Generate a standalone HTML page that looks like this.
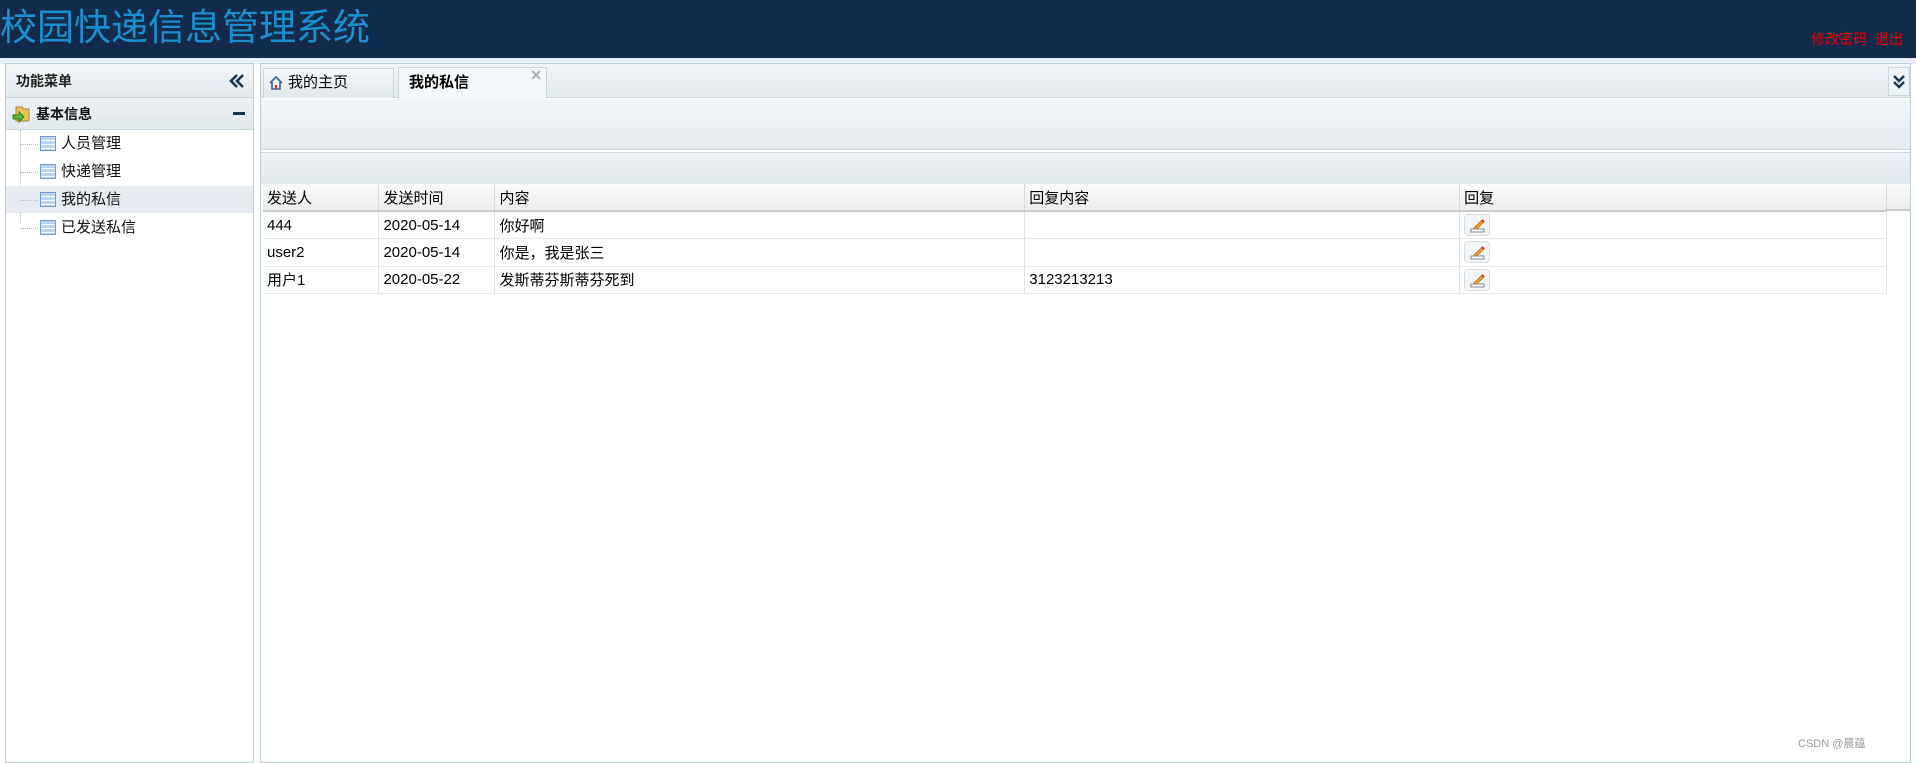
<!DOCTYPE html>
<html><head><meta charset="utf-8"><style>
*{margin:0;padding:0;box-sizing:border-box}
body{width:1916px;height:758px;overflow:hidden;background:#fff;font-family:"Liberation Sans","Noto Sans CJK SC",sans-serif;font-size:15px;color:#000;position:relative}
.a{position:absolute}
.hdr{left:0;top:0;width:1916px;height:58px;background:#122b4a}
.title{left:0;top:-3px;font-size:37px;color:#1a8fd0}
.links{right:13px;top:29px;font-size:14px;color:#e00}
.grey{background:#e9eef2}
.side{left:5px;top:63px;width:249px;height:700px;border:1px solid #b9ced9;background:#fff}
.sh{left:0;top:0;width:247px;height:34px;background:linear-gradient(#f2f6f8,#e3eaee);border-bottom:1px solid #c6d6de;font-weight:bold;font-size:14px;color:#222;padding:7px 0 0 10px}
.sh2{left:0;top:34px;width:247px;height:32px;background:linear-gradient(#eef3f5,#e1e9ed);border-bottom:1px solid #c6d6de;font-weight:bold;font-size:14px;color:#111;padding:6px 0 0 30px}
.it{left:0;width:247px;height:27px;font-size:15px;padding:2px 0 0 55px;color:#111}
.ic{width:16px;height:15px;border:1px solid #6f9bd0;background:repeating-linear-gradient(#bcd5f0 0 3px,#fff 3px 4px);left:34px;top:6px}
.main{left:260px;top:63px;width:1651px;height:700px;border:1px solid #b9ced9;background:#fff}
td,th{border-right:1px solid #e3e3e3;border-bottom:1px solid #e8e8e8;height:27.5px;text-align:left;font-weight:normal;padding:0 4px;font-size:15px;white-space:nowrap}
th{background:linear-gradient(#fafafa,#ececec);border-right:1px solid #d8d8d8;border-bottom:2px solid #ccc;height:27px}
.btn{display:inline-block;width:26px;height:22px;border:1px solid #d5dde4;border-radius:4px;background:#f3f6f8;vertical-align:middle;position:relative}
</style></head><body>
<div class="a hdr"></div>
<div class="a title">校园快递信息管理系统</div>
<div class="a links">修改密码&nbsp; 退出</div>
<div class="a grey" style="left:0;top:58px;width:1916px;height:6px"></div>

<div class="a side">
 <div class="a sh">功能菜单<svg class="a" style="right:8px;top:10px" width="16" height="14" viewBox="0 0 16 14"><path d="M8 1L2 7l6 6M14 1L8 7l6 6" fill="none" stroke="#1c3550" stroke-width="2.6"/></svg></div>
 <div class="a sh2">基本信息
  <svg class="a" style="left:6px;top:6px" width="20" height="20" viewBox="0 0 20 20"><path d="M4 3h6l2 2h5v12H4z" fill="#e8c458" stroke="#a8842a"/><path d="M1 11h6v-3l5 5-5 5v-3H1z" fill="#5ab53a" stroke="#2f7d1e"/></svg>
  <span class="a" style="right:8px;top:14px;width:12px;height:3px;background:#1c3550"></span></div>
 <div class="a" style="left:14px;top:66px;height:94px;border-left:1px dotted #bbb"></div>
 <div class="a it" style="top:66px"><div class="a ic"></div><span class="a" style="left:14px;top:14px;width:18px;border-top:1px dotted #bbb"></span>人员管理</div>
 <div class="a it" style="top:94px"><div class="a ic"></div><span class="a" style="left:14px;top:14px;width:18px;border-top:1px dotted #bbb"></span>快递管理</div>
 <div class="a it" style="top:122px;background:#e6ecf2"><div class="a ic"></div><span class="a" style="left:14px;top:14px;width:18px;border-top:1px dotted #bbb"></span>我的私信</div>
 <div class="a it" style="top:150px"><div class="a ic"></div><span class="a" style="left:14px;top:14px;width:18px;border-top:1px dotted #bbb"></span>已发送私信</div>
</div>

<div class="a main">
 <div class="a" style="left:0;top:0;width:1649px;height:34px;background:linear-gradient(#f1f5f7,#e4ebef);border-bottom:1px solid #c6d6de"></div>
 <div class="a" style="left:2px;top:4px;width:131px;height:30px;border:1px solid #c6d6de;border-bottom:none;background:linear-gradient(#f4f7f9,#e1e9ed);font-size:15px;padding:2px 0 0 24px">我的主页
  <svg class="a" style="left:5px;top:7px" width="14" height="14" viewBox="0 0 14 14"><path d="M1 7L7 1l6 6M3 6v7h8V6" fill="none" stroke="#3a5d9a" stroke-width="1.6"/><rect x="6" y="9" width="2" height="4" fill="#c33"/></svg></div>
 <div class="a" style="left:137px;top:3px;width:149px;height:32px;border:1px solid #c6d6de;border-bottom:none;background:#f5f8fa;font-weight:bold;font-size:15px;padding:3px 0 0 10px">我的私信<span class="a" style="right:4px;top:-1px;color:#a0b0bc;font-size:14px">✕</span></div>
 <div class="a" style="right:0;top:3px;width:22px;height:29px;border:1px solid #c6d6de;background:#eef3f5"><svg class="a" style="left:4px;top:7px" width="12" height="14" viewBox="0 0 12 14"><path d="M1 1l5 5 5-5M1 7l5 5 5-5" fill="none" stroke="#1c3550" stroke-width="2.4"/></svg></div>
 <div class="a" style="left:0;top:35px;width:1649px;height:51px;background:linear-gradient(#f1f5f7,#e5ecf0);border-bottom:1px solid #c6d6de"></div>
 <div class="a" style="left:0;top:88px;width:1649px;height:32px;background:linear-gradient(#eef3f5,#e1e9ed);border-top:1px solid #c6d6de"></div>
 <table class="a" style="left:2px;top:120px;border-collapse:collapse;width:1624px">
  <tr><th style="width:116px">发送人</th><th style="width:116px">发送时间</th><th style="width:530px">内容</th><th style="width:435px">回复内容</th><th style="width:427px">回复</th></tr>
  <tr><td>444</td><td>2020-05-14</td><td>你好啊</td><td></td><td><span class="btn"><svg class="a" style="left:5px;top:3px" width="16" height="15" viewBox="0 0 16 15"><path d="M4 10L12 2l2 2-8 8z" fill="#f0a020" stroke="#b05010" stroke-width=".6"/><path d="M12 2l2 2" stroke="#d33" stroke-width="2"/><rect x="1" y="11" width="13" height="3" fill="#fff" stroke="#888"/></svg></span></td></tr>
  <tr><td>user2</td><td>2020-05-14</td><td>你是，我是张三</td><td></td><td><span class="btn"><svg class="a" style="left:5px;top:3px" width="16" height="15" viewBox="0 0 16 15"><path d="M4 10L12 2l2 2-8 8z" fill="#f0a020" stroke="#b05010" stroke-width=".6"/><path d="M12 2l2 2" stroke="#d33" stroke-width="2"/><rect x="1" y="11" width="13" height="3" fill="#fff" stroke="#888"/></svg></span></td></tr>
  <tr><td>用户1</td><td>2020-05-22</td><td>发斯蒂芬斯蒂芬死到</td><td>3123213213</td><td><span class="btn"><svg class="a" style="left:5px;top:3px" width="16" height="15" viewBox="0 0 16 15"><path d="M4 10L12 2l2 2-8 8z" fill="#f0a020" stroke="#b05010" stroke-width=".6"/><path d="M12 2l2 2" stroke="#d33" stroke-width="2"/><rect x="1" y="11" width="13" height="3" fill="#fff" stroke="#888"/></svg></span></td></tr>
 </table>
 <div class="a" style="left:1626px;top:120px;width:23px;height:27px;background:linear-gradient(#fafafa,#ececec);border-bottom:2px solid #ccc"></div>
</div>
<div class="a" style="left:1798px;top:735px;font-size:11px;color:#999">CSDN @晨蕴</div>
</body></html>
